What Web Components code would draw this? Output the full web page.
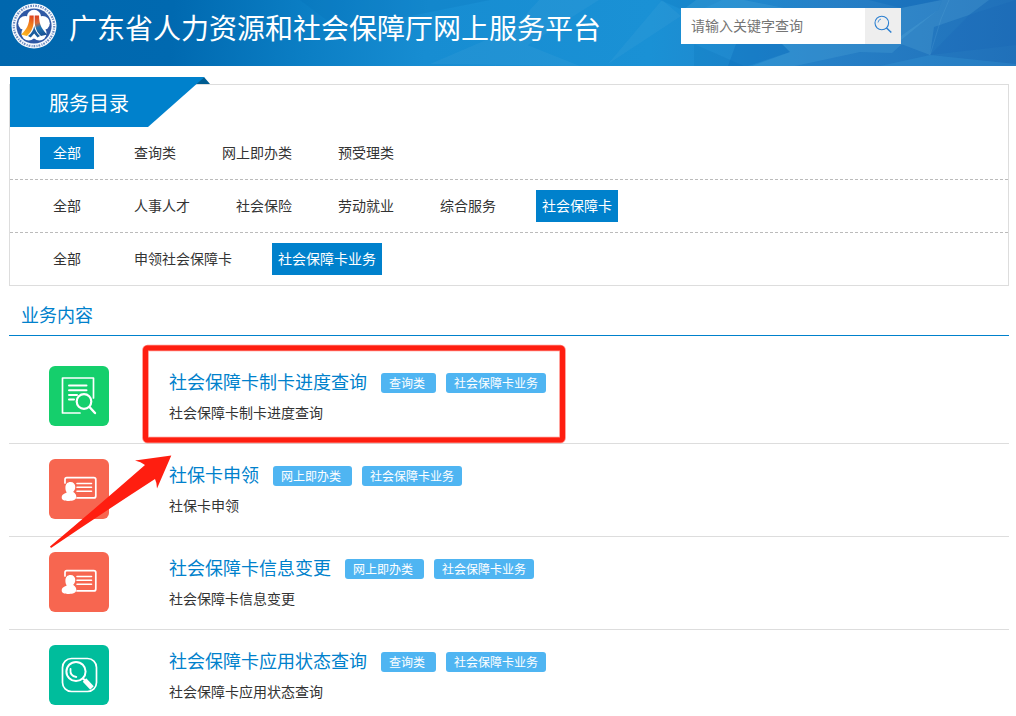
<!DOCTYPE html>
<html lang="zh-CN">
<head>
<meta charset="utf-8">
<meta name="viewport" content="width=device-width, initial-scale=1">
<title>广东省人力资源和社会保障厅网上服务平台</title>
<style>
  body { margin: 0; background: #fff; color: #333; font: 14px/20px "Noto Sans CJK SC", sans-serif; --brand: #0081cc; --line: #ddd; }
  main { display: block; padding: 0 7px 0 9px; }
</style>
</head>
<body>
<site-header>广东省人力资源和社会保障厅网上服务平台</site-header>
<main>
  <catalog-panel heading="服务目录">
    <filter-row>
      <filter-item active>全部</filter-item><filter-item>查询类</filter-item><filter-item>网上即办类</filter-item><filter-item>预受理类</filter-item>
    </filter-row>
    <filter-row>
      <filter-item>全部</filter-item><filter-item>人事人才</filter-item><filter-item>社会保险</filter-item><filter-item>劳动就业</filter-item><filter-item>综合服务</filter-item><filter-item active>社会保障卡</filter-item>
    </filter-row>
    <filter-row>
      <filter-item>全部</filter-item><filter-item>申领社会保障卡</filter-item><filter-item active>社会保障卡业务</filter-item>
    </filter-row>
  </catalog-panel>
  <service-list heading="业务内容">
    <service-item icon="progress" kind="查询类" group="社会保障卡业务">社会保障卡制卡进度查询<span slot="desc">社会保障卡制卡进度查询</span><mark-callout slot="mark"></mark-callout></service-item>
    <service-item icon="card" kind="网上即办类" group="社会保障卡业务">社保卡申领<span slot="desc">社保卡申领</span></service-item>
    <service-item icon="card" kind="网上即办类" group="社会保障卡业务">社会保障卡信息变更<span slot="desc">社会保障卡信息变更</span></service-item>
    <service-item icon="status" kind="查询类" group="社会保障卡业务">社会保障卡应用状态查询<span slot="desc">社会保障卡应用状态查询</span></service-item>
  </service-list>
</main>
<script>
const define = (name, render) => customElements.define(name, class extends HTMLElement {
  constructor() { super(); this.attachShadow({ mode: 'open' }); }
  connectedCallback() {
    const t = document.createElement('template');
    t.innerHTML = render(this);
    this.shadowRoot.replaceChildren(t.content.cloneNode(true));
  }
});

define('site-emblem', () => `
<style>:host { display: block; width: 46px; height: 46px; flex: none } svg { display: block }</style>
<svg width="46" height="46" viewBox="0 0 46 46" aria-hidden="true">
  <defs>
    <linearGradient id="o" gradientUnits="userSpaceOnUse" x1="22" y1="12" x2="13" y2="33"><stop offset="0" stop-color="#dc3c1e"/><stop offset=".4" stop-color="#f07a1c"/><stop offset="1" stop-color="#fdb822"/></linearGradient>
    <linearGradient id="b" gradientUnits="userSpaceOnUse" x1="25" y1="12" x2="33" y2="33"><stop offset="0" stop-color="#dc3c1e"/><stop offset=".35" stop-color="#d86a38"/><stop offset=".55" stop-color="#2177b4"/><stop offset="1" stop-color="#174d90"/></linearGradient>
  </defs>
  <circle cx="23" cy="23" r="22.500" fill="#f6f9fd"/>
  <circle cx="23" cy="23" r="20.200" fill="none" stroke="#6d8cc0" stroke-width="2.200" stroke-dasharray="1.700 1 1 1.300" pathLength="125"/>
  <circle cx="23" cy="23" r="17.600" fill="#2e58a5"/>
  <g fill="#fff"><circle cx="23" cy="14" r="7.200"/><circle cx="31.600" cy="20.200" r="7.200"/><circle cx="28.300" cy="30.300" r="7.200"/><circle cx="17.700" cy="30.300" r="7.200"/><circle cx="14.400" cy="20.200" r="7.200"/><circle cx="23" cy="23" r="9"/></g>
  <path d="M18.500 12.500h4.200v5c0 7-2.700 12-6.700 15.500l-6-1.500c5-4 8.500-10 8.500-19z" fill="url(#o)"/>
  <path d="M23.700 12.500H28c0 9 3.500 15 8.500 19L30 33c-4-3.500-6.300-8.500-6.300-15.500z" fill="url(#b)"/>
  <path d="M23.200 23c.6 4 2.800 7.500 5.800 10l-2.500 1.500-3.300-4-3.500 4-2.700-1.500c3.500-2.500 5.700-6 6.200-10z" fill="#1b5c9d"/>
</svg>`);

define('search-box', () => `
<style>
  :host { display: block; flex: none }
  form { display: flex; margin: 0; height: 36px }
  input { box-sizing: border-box; width: 184px; padding: 0 10px 2px; border: 0; border-radius: 0; background: #fff; color: #333; font: inherit; outline: 0 }
  input::placeholder { color: #757575; opacity: 1 }
  button { width: 36px; padding: 0 0 2px; border: 0; background: #eee; display: grid; place-items: center; cursor: pointer }
</style>
<form onsubmit="return false">
  <input type="text" placeholder="请输入关键字查询" aria-label="请输入关键字查询">
  <button aria-label="查询"><svg width="20" height="20" viewBox="0 0 20 20" fill="none" stroke="#2b7fd0" stroke-width="1.100"><circle cx="8.800" cy="8" r="6.800"/><path d="M13.300 12.700l5 4.800" stroke-width="1.500"/><path d="M5 7.500a4 4 0 0 1 3-3.500" stroke-width=".8"/></svg></button>
</form>`);

define('site-header', () => `
<style>
  :host { display: flex; position: relative; height: 66px; overflow: hidden; background: #1890d5 }
  .bg { position: absolute; inset: 0; width: 100%; height: 100% }
  .bar { position: relative; display: flex; align-items: flex-start; padding: 3px 0 0 11px }
  h1 { margin: 0 80px 0 12px; color: #fff; font-size: 28px; line-height: 48px; font-weight: 400; white-space: nowrap }
  search-box { margin-top: 5px }
</style>
<svg class="bg" viewBox="0 0 1016 66" preserveAspectRatio="none" aria-hidden="true">
  <defs><linearGradient id="g" gradientUnits="userSpaceOnUse" x1="0" y1="0" x2="1016" y2="66">
    <stop offset="0" stop-color="#0067ae"/><stop offset=".17" stop-color="#0069b0"/><stop offset=".3" stop-color="#0b7ec4"/><stop offset=".42" stop-color="#178dd2"/><stop offset=".64" stop-color="#1a91d5"/><stop offset=".82" stop-color="#267fc6"/><stop offset="1" stop-color="#2070b9"/>
  </linearGradient></defs>
  <path fill="url(#g)" d="M0 0h1016v66H0z"/>
  <path fill="#fff" fill-opacity=".04" d="M662 0l-54 64 73-48zM430 64l70-30 80 32zM495 66l4-22 40-44h60z"/>
  <path fill="#0062ac" fill-opacity=".15" d="M300 0h190l-150 30zM660 0h62l-30 14zM694 44l50 22h-50z"/>
  <path fill="#0060b4" fill-opacity=".25" d="M736 44h46l8 8-42 14h-20zM901 8l38-8h-70z"/>
  <path fill="#5cb1dd" fill-opacity=".22" d="M790 52l-8-8h120l-10 9-32-1-65 14h-43zM680 12l16-12h48l40 8h-60zM901 8l41-8-4 10-37 30z"/>
  <path fill="#6ab8e0" fill-opacity=".2" d="M942 0h47l-20 15-35 12-4 28-29-11v-8l37-26z"/>
  <path fill="#1560b2" fill-opacity=".2" d="M969 15l47-15v45l-86 10z"/>
  <path fill="#3aa0dc" fill-opacity=".25" d="M930 55l86 9v2H880z"/>
  <path fill="none" stroke="#7fc3e8" stroke-opacity=".14" d="M930 55l11-36 8-19M694 44l50-28"/>
</svg>
<div class="bar"><site-emblem></site-emblem><h1><slot></slot></h1><search-box></search-box></div>`);

define('catalog-panel', el => `
<style>
  :host { display: block; margin-top: 18px; border: 1px solid var(--line) }
  .tab { position: relative; width: 200px; height: 50px; margin-top: -8px }
  .tab svg { position: absolute; inset: 0 }
  h2 { position: relative; margin: 0; padding-left: 39px; color: #fff; font-size: 20px; line-height: 52px; font-weight: 400 }
</style>
<div class="tab"><svg width="200" height="50" aria-hidden="true"><path fill="#005c91" d="M194 0l6 7h-16z"/><path fill="#0081cc" d="M0 0h194.500L138 50H0z"/></svg><h2>${el.getAttribute('heading')}</h2></div>
<slot></slot>`);

define('filter-row', () => `
<style>
  :host { display: flex; flex-wrap: wrap; gap: 10px 34px; padding: 10px 30px; border-bottom: 1px dashed #bbb }
  :host(:last-child) { border-bottom: 0 }
</style><slot></slot>`);

define('filter-item', () => `
<style>
  :host { display: block }
  a { display: block; box-sizing: border-box; min-width: 54px; padding: 0 6px 2px; color: #333; line-height: 30px; text-align: center; text-decoration: none }
  :host([active]) a { background: var(--brand); color: #fff }
</style><a href="#"><slot></slot></a>`);

define('service-list', el => `
<style>
  :host { display: block; margin-top: 12px }
  h2 { margin: 0 0 15px; padding: 0 12px 4px; border-bottom: 1px solid var(--brand); color: var(--brand); font-size: 18px; line-height: 33px; font-weight: 400 }
</style><h2>${el.getAttribute('heading')}</h2><slot></slot>`);

const icons = {
  progress: ['#15cf6c', '<path stroke-width="1.700" d="M31 47H13.500V12h31v20"/><path stroke-width="2" d="M20 19.500h17.500M20 24.200h17.500M20 29h8M20 33.600h5"/><circle cx="35" cy="35.500" r="7.300" stroke-width="2.200"/><path stroke-width="2.400" d="M40.500 41l5.500 6"/>'],
  card: ['#f76650', '<path stroke-width="1.700" d="M16 24v-3.500a1.800 1.800 0 0 1 1.800-1.800h27a2 2 0 0 1 2 2v16.200a2 2 0 0 1-2 2H28"/><path stroke-width="1.600" d="M28 24.500h14.500M28 28.300h14.500M28 32.200h14.500"/><path fill="#fff" stroke="none" d="M21.500 23c3 0 4.800 2 4.800 5 0 2-1 3.600-2 4.600.2 1.400 3 1.800 3 5 0 3.500-3.500 4.400-7.200 4.400-4 0-7.400-.6-7.400-3.500 0-3 3-4 5-5-1-1.500-1.300-3-1.300-5 0-3.300 2-5.500 5.100-5.500z"/>'],
  status: ['#00bd9c', '<rect x="13.500" y="13.500" width="34" height="33" rx="9" stroke-width="1.700"/><circle cx="27" cy="26.500" r="9.600" stroke-width="2"/><path stroke-width="1.800" d="M21.500 24c-.5 4.500 1.500 7.500 5.800 8"/><path stroke-width="2" d="M34 33.500l2.500 2.500"/><path stroke-width="4.800" stroke-linecap="butt" d="M35.500 35l7.500 8"/>']
};
define('service-item', el => {
  const [color, art] = icons[el.getAttribute('icon')];
  return `
<style>
  :host { display: flex; position: relative; gap: 60px; padding: 15px 0 17px 40px; border-bottom: 1px solid var(--line) }
  :host(:last-child) { padding-bottom: 8px; border-bottom: 0 }
  .icon { display: block; flex: none; width: 60px; height: 60px; border-radius: 6px; background: ${color} }
  .head { display: flex; align-items: center; gap: 10px; height: 32px }
  h3 { margin: 0 4px 0 0; padding-bottom: 2px; font-size: 18px; line-height: 30px; font-weight: 400 }
  a { color: var(--brand); text-decoration: none }
  .tag { padding: 0 8px; border-radius: 3px; background: #4fb5f2; color: #fff; font-size: 12px; line-height: 20px; margin-top: 2px }
  .kind { padding-right: 11px }
  p { margin: 2px 0 0; line-height: 24px }
</style>
<svg class="icon" viewBox="0 0 60 60" fill="none" stroke="#fff" stroke-linecap="round" stroke-linejoin="round" aria-hidden="true">${art}</svg>
<div><div class="head"><h3><a href="#"><slot></slot></a></h3><span class="tag kind">${el.getAttribute('kind')}</span><span class="tag">${el.getAttribute('group')}</span></div>
<p><slot name="desc"></slot></p></div>
<slot name="mark"></slot>`;
});

/* Red frame and arrow pointing at the highlighted service */
define('mark-callout', () => `
<style>:host { position: absolute; left: 33px; top: -7px; z-index: 1; pointer-events: none } svg { display: block }</style>
<svg width="530" height="210" viewBox="42 344 530 210" aria-hidden="true">
  <rect x="145.500" y="348" width="417" height="92" rx="2" fill="none" stroke="#ff1e10" stroke-opacity=".5" stroke-width="6.600"/>
  <rect x="145.500" y="348" width="417" height="92" rx="2" fill="none" stroke="#ff1e10" stroke-width="5"/>
  <path fill="#ff1e10" d="M171.300 455.500L135 460.600Q141 462 145 465Q97 507 50 546.500L51 548Q101 514 155 479Q157 483 157 488.500Z"/>
</svg>`);
</script>
</body>
</html>
